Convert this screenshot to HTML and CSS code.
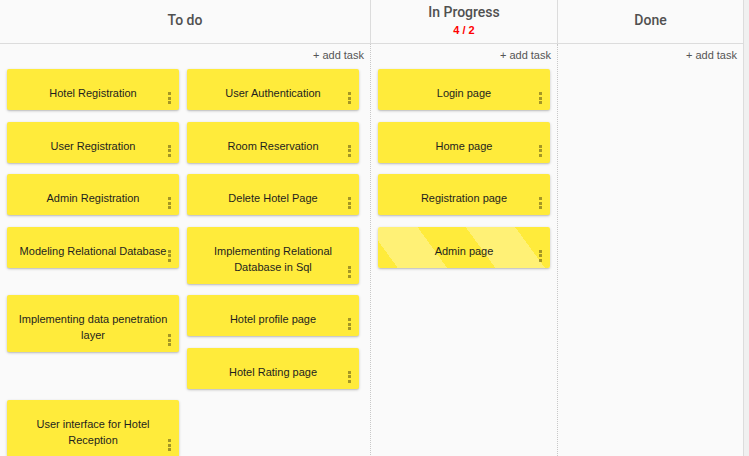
FILE: index.html
```html
<!DOCTYPE html>
<html lang="en">
<head>
<meta charset="utf-8">
<title>Board</title>
<link rel="stylesheet" href="styles.css">
</head>
<body>
<div class="board">
  <section class="column col-todo">
    <header class="col-header"><div class="col-title">To do</div></header>
    <div class="col-body">
      <div class="add-row"><span class="add-task">+ add task</span></div>
      <div class="cards">
        <div class="card"><span class="card-text">Hotel Registration</span><span class="dots"><i></i><i></i><i></i></span></div>
        <div class="card"><span class="card-text">User Authentication</span><span class="dots"><i></i><i></i><i></i></span></div>
        <div class="card"><span class="card-text">User Registration</span><span class="dots"><i></i><i></i><i></i></span></div>
        <div class="card"><span class="card-text">Room Reservation</span><span class="dots"><i></i><i></i><i></i></span></div>
        <div class="card"><span class="card-text">Admin Registration</span><span class="dots"><i></i><i></i><i></i></span></div>
        <div class="card"><span class="card-text">Delete Hotel Page</span><span class="dots"><i></i><i></i><i></i></span></div>
        <div class="card"><span class="card-text">Modeling Relational Database</span><span class="dots"><i></i><i></i><i></i></span></div>
        <div class="card"><span class="card-text">Implementing Relational Database in Sql</span><span class="dots"><i></i><i></i><i></i></span></div>
        <div class="card"><span class="card-text">Implementing data penetration layer</span><span class="dots"><i></i><i></i><i></i></span></div>
        <div class="card"><span class="card-text">Hotel profile page</span><span class="dots"><i></i><i></i><i></i></span></div>
        <div class="card"><span class="card-text">Hotel Rating page</span><span class="dots"><i></i><i></i><i></i></span></div>
        <div class="card"><span class="card-text">User interface for Hotel Reception</span><span class="dots"><i></i><i></i><i></i></span></div>
      </div>
    </div>
  </section>
  <section class="column col-progress">
    <header class="col-header"><div class="col-title">In Progress</div><div class="wip">4 / 2</div></header>
    <div class="col-body">
      <div class="add-row"><span class="add-task">+ add task</span></div>
      <div class="cards">
        <div class="card"><span class="card-text">Login page</span><span class="dots"><i></i><i></i><i></i></span></div>
        <div class="card"><span class="card-text">Home page</span><span class="dots"><i></i><i></i><i></i></span></div>
        <div class="card"><span class="card-text">Registration page</span><span class="dots"><i></i><i></i><i></i></span></div>
        <div class="card card-striped"><span class="card-text">Admin page</span><span class="dots"><i></i><i></i><i></i></span></div>
      </div>
    </div>
  </section>
  <section class="column col-done">
    <header class="col-header"><div class="col-title">Done</div></header>
    <div class="col-body">
      <div class="add-row"><span class="add-task">+ add task</span></div>
      <div class="cards"></div>
    </div>
  </section>
  <div class="edge"></div>
</div>
</body>
</html>
```
FILE: styles.css
```css
* { box-sizing: border-box; }
html, body { margin: 0; padding: 0; }
body {
  font-family: "Liberation Sans", Arial, sans-serif;
  background: #fafafa;
  color: #333;
  width: 749px;
  height: 456px;
  overflow: hidden;
}
.board {
  display: grid;
  grid-template-columns: 371px 187px 186px 1fr;
  height: 456px;
}
.column {
  display: flex;
  flex-direction: column;
  min-height: 0;
}
.col-header {
  height: 44px;
  flex: none;
  display: flex;
  flex-direction: column;
  align-items: center;
  justify-content: center;
  padding-bottom: 3px;
  border-bottom: 1px solid #dcdcdc;
  border-right: 1px solid #dcdcdc;
  background: #fafafa;
}
.col-title {
  font-family: Roboto, "Liberation Sans", Arial, sans-serif;
  font-size: 14px;
  font-weight: 500;
  line-height: 16px;
  color: #505050;
}
.wip {
  margin-top: 3px;
  font-size: 11px;
  font-weight: 700;
  line-height: 14px;
  color: #f00;
}
.col-body {
  flex: 1;
  border-right: 1px dotted #c8c8c8;
}
.col-done .col-body { border-right: 1px solid #dcdcdc; }
.add-row {
  padding: 3px 6px 0 0;
  text-align: right;
  font-size: 11px;
  line-height: 16px;
}
.add-task {
  color: #555;
}
.cards {
  margin-top: 6px;
  padding-left: 7px;
}
.cards::after { content: ""; display: block; clear: both; }
.card {
  position: relative;
  float: left;
  width: 172px;
  margin: 0 8px 11.5px 0;
  padding: 16px 10px 9px;
  background: #ffeb3b;
  border-radius: 2px;
  box-shadow: 0 1px 3px rgba(0, 0, 0, 0.2), 0 1px 1px rgba(0, 0, 0, 0.08);
  text-align: center;
}
.card-text {
  display: block;
  font-size: 11px;
  line-height: 16px;
  color: #1e1e1e;
}
.card-striped {
  background: repeating-linear-gradient(54deg,
    #ffeb3b 0, #ffeb3b 16px,
    #fff176 16px, #fff176 56px,
    #ffeb3b 56px, #ffeb3b 79px);
}
.dots {
  position: absolute;
  right: 8px;
  bottom: 6px;
  display: flex;
  flex-direction: column;
  gap: 1.5px;
}
.dots i {
  display: block;
  width: 3px;
  height: 3px;
  background: rgba(90, 80, 20, 0.55);
}
.edge {
  background: #f0f0f0;
}
```
